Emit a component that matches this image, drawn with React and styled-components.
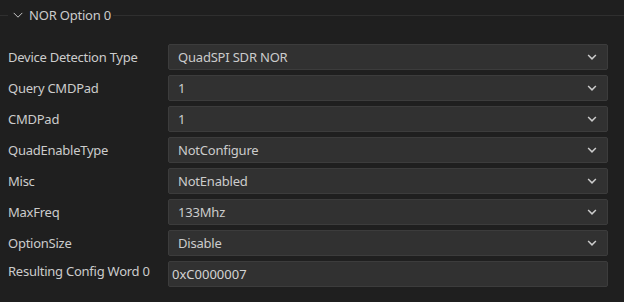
import React from 'react';
import styled, { createGlobalStyle } from 'styled-components';

const GlobalStyle = createGlobalStyle`
  html, body {
    margin: 0;
    padding: 0;
    background: #1f1f1f;
  }
  body {
    font-family: "Noto Sans", "Open Sans", sans-serif;
    font-size: 13px;
    color: #cccccc;
  }
`;

const Panel = styled.div`
  width: 624px;
  height: 302px;
  background: #1f1f1f;
  box-sizing: border-box;
  padding: 0 16px 0 8px;
`;

const Header = styled.div`
  display: flex;
  align-items: center;
  height: 30px;
  margin-left: -8px;
  margin-right: -16px;
`;

const Rule = styled.div`
  height: 1px;
  background: #2f2f2f;
  flex: ${p => (p.$grow ? 1 : 'none')};
  width: ${p => (p.$grow ? 'auto' : '8px')};
`;

const Toggle = styled.div`
  display: flex;
  align-items: center;
  gap: 4px;
  padding: 0 2px 0 3px;
  color: #cccccc;
  font-size: 13px;
  letter-spacing: -0.2px;
`;

const Form = styled.div`
  display: grid;
  grid-template-columns: 160px 1fr;
  row-gap: 5px;
  margin-top: 14px;
`;

const Label = styled.div`
  display: flex;
  align-items: ${p => (p.$top ? 'flex-start' : 'center')};
  padding-top: ${p => (p.$top ? '1px' : '0')};
  height: 26px;
  color: #cccccc;
  font-size: 13px;
  letter-spacing: -0.25px;
  white-space: nowrap;
`;

const Select = styled.div`
  display: flex;
  align-items: center;
  justify-content: space-between;
  height: 26px;
  box-sizing: border-box;
  background: #313131;
  border: 1px solid #3c3c3c;
  border-radius: 2px;
  padding: 0 9px 0 9px;
  color: #cccccc;
  font-size: 13px;
  letter-spacing: -0.2px;
`;

const Input = styled.div`
  display: flex;
  align-items: center;
  height: 26px;
  box-sizing: border-box;
  background: #313131;
  border: 1px solid #3c3c3c;
  border-radius: 2px;
  padding: 0 3px;
  color: #d4d4d4;
  font-size: 13px;
`;

const Chevron = ({ size = 12, stroke = 1.9 }) => (
  <svg width={size} height={size} viewBox="0 0 16 16" fill="none">
    <path d="M3.5 6l4.5 4.5L12.5 6" stroke="#cccccc" strokeWidth={stroke} strokeLinecap="square" />
  </svg>
);

const rows = [
  ['Device Detection Type', 'QuadSPI SDR NOR'],
  ['Query CMDPad', '1'],
  ['CMDPad', '1'],
  ['QuadEnableType', 'NotConfigure'],
  ['Misc', 'NotEnabled'],
  ['MaxFreq', '133Mhz'],
  ['OptionSize', 'Disable'],
];

export default function App() {
  return (
    <>
      <GlobalStyle />
      <Panel>
        <Header>
          <Rule />
          <Toggle>
            <Chevron size={14} stroke={1.1} />
            NOR Option 0
          </Toggle>
          <Rule $grow />
        </Header>
        <Form>
          {rows.map(([label, value]) => (
            <React.Fragment key={label}>
              <Label>{label}</Label>
              <Select>
                <span>{value}</span>
                <Chevron />
              </Select>
            </React.Fragment>
          ))}
          <Label $top>Resulting Config Word 0</Label>
          <Input>0xC0000007</Input>
        </Form>
      </Panel>
    </>
  );
}
